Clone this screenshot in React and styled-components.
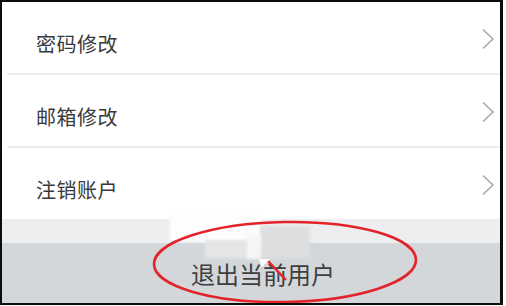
import React from "react";
import styled, { createGlobalStyle } from "styled-components";

const Global = createGlobalStyle`
  * { box-sizing: border-box; }
  html, body { margin: 0; padding: 0; background: #ffffff; }
  body { font-family: "Noto Sans CJK SC", "Noto Sans", sans-serif; }
`;

const Frame = styled.div`
  position: relative;
  width: 503px;
  height: 305px;
  border: 2px solid #0d0d0d;
  border-right-width: 3px;
  background: #ffffff;
  display: flex;
  flex-direction: column;
  overflow: hidden;
`;

const List = styled.div`
  display: flex;
  flex-direction: column;
`;

const Row = styled.div`
  position: relative;
  height: ${(p) => (p.$last ? 71 : 73)}px;
  display: flex;
  align-items: flex-start;
  justify-content: space-between;
  padding: 0 5px 0 34px;
  &::after {
    content: "";
    display: ${(p) => (p.$last ? "none" : "block")};
    position: absolute;
    left: 5px;
    right: 0;
    bottom: 0;
    height: 2px;
    background: #ececec;
  }
`;

const Label = styled.span`
  margin-top: 31px;
  font-size: 20px;
  line-height: 22px;
  color: #3a3a3a;
  letter-spacing: 0.5px;
`;

const Chevron = styled.svg`
  margin-top: 26px;
  width: 14px;
  height: 22px;
  flex: none;
`;

const Gap = styled.div`
  height: 24px;
  background: #eeeef0;
`;

const Logout = styled.div`
  flex: 1;
  display: flex;
  align-items: center;
  justify-content: center;
  padding-left: 24px;
  background: #d4d7d9;
  font-size: 24px;
  color: #3f3f3f;
`;

const Overlay = styled.svg`
  position: absolute;
  left: -2px;
  top: -2px;
  width: 506px;
  height: 306px;
  pointer-events: none;
`;

const Patch = styled.div`
  position: absolute;
  left: ${(p) => p.$x}px;
  top: ${(p) => p.$y}px;
  width: ${(p) => p.$w}px;
  height: ${(p) => p.$h}px;
  background: ${(p) => p.$c};
  filter: blur(1.5px);
  pointer-events: none;
`;

const ChevronIcon = () => (
  <Chevron viewBox="0 0 14 22">
    <path d="M2 1.5 L12 11 L2 20.5" fill="none" stroke="#aaaaaa" strokeWidth="1.6" />
  </Chevron>
);

const items = ["密码修改", "邮箱修改", "注销账户"];

export default function App() {
  return (
    <>
      <Global />
      <Frame>
        <List>
          {items.map((t, i) => (
            <Row key={t} $last={i === items.length - 1}>
              <Label>{t}</Label>
              <ChevronIcon />
            </Row>
          ))}
        </List>
        <Gap />
        <Logout>退出当前用户</Logout>
        <Patch $x={168} $y={211} $w={92} $h={28} $c="#fdfdfd" />
        <Patch $x={203} $y={238} $w={46} $h={18} $c="#e4e5e7" />
        <Patch $x={258} $y={224} $w={50} $h={32} $c="#dcdee0" />
        <Patch $x={245} $y={232} $w={14} $h={25} $c="#f6f6f7" />
        <Overlay viewBox="0 0 506 306">
          <ellipse cx="285" cy="262" rx="131" ry="40" fill="none" stroke="#e2232a" strokeWidth="2.6" transform="rotate(-1 285 262)" />
          <path d="M268 261 L286 280" stroke="#e2232a" strokeWidth="2.4" fill="none" />
          <path d="M259 259 L270 259 L262 267 Z" fill="#ffffff" />
        </Overlay>
      </Frame>
    </>
  );
}
